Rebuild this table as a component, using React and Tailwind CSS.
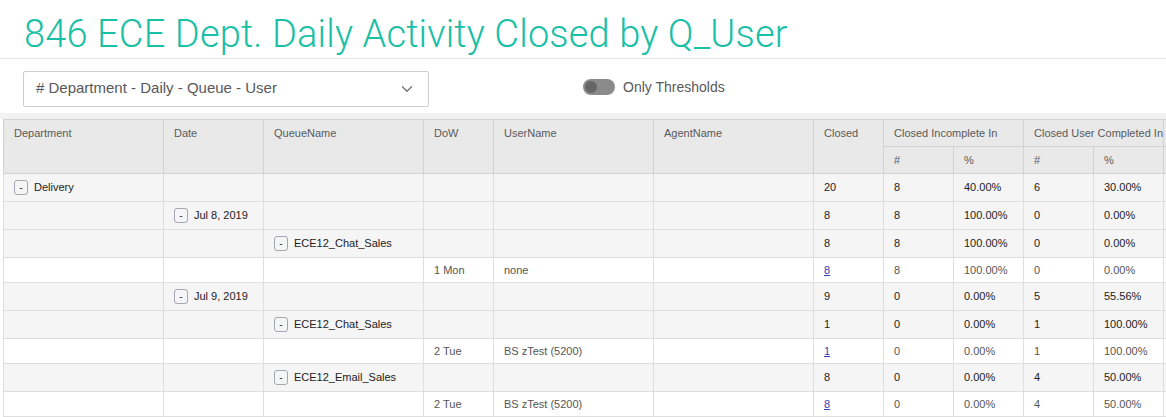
import { ChevronDown } from 'lucide-react'

const rows = [
  { group: true, dept: 'Delivery', closed: '20', ci: '8', cip: '40.00%', cu: '6', cup: '30.00%' },
  { group: true, date: 'Jul 8, 2019', closed: '8', ci: '8', cip: '100.00%', cu: '0', cup: '0.00%' },
  { group: true, queue: 'ECE12_Chat_Sales', closed: '8', ci: '8', cip: '100.00%', cu: '0', cup: '0.00%' },
  { dow: '1 Mon', user: 'none', closed: '8', link: true, ci: '8', cip: '100.00%', cu: '0', cup: '0.00%' },
  { group: true, date: 'Jul 9, 2019', closed: '9', ci: '0', cip: '0.00%', cu: '5', cup: '55.56%' },
  { group: true, queue: 'ECE12_Chat_Sales', closed: '1', ci: '0', cip: '0.00%', cu: '1', cup: '100.00%' },
  { dow: '2 Tue', user: 'BS zTest (5200)', closed: '1', link: true, ci: '0', cip: '0.00%', cu: '1', cup: '100.00%' },
  { group: true, queue: 'ECE12_Email_Sales', closed: '8', ci: '0', cip: '0.00%', cu: '4', cup: '50.00%' },
  { dow: '2 Tue', user: 'BS zTest (5200)', closed: '8', link: true, ci: '0', cip: '0.00%', cu: '4', cup: '50.00%' },
]

function Toggle({ label }) {
  return (
    <span className="inline-flex items-center gap-2">
      <span className="relative h-[16px] w-[32px] rounded-full bg-[#8a8a8a]">
        <span className="absolute left-[2px] top-[2px] h-[12px] w-[12px] rounded-full bg-[#666]" />
      </span>
      <span className="text-[14px] text-[#58585b]">{label}</span>
    </span>
  )
}

function Expander({ children }) {
  return (
    <span className="inline-flex items-center gap-[6px]">
      <span className="flex h-[15px] w-[14px] items-center justify-center rounded-[3px] border border-[#a4a6b4] text-[10px] leading-none text-[#333]">
        -
      </span>
      <span>{children}</span>
    </span>
  )
}

export default function App() {
  const th = 'border border-[#d2d2d2] px-[10px] text-left font-normal'
  const td = 'border border-[#dedede] px-[10px] whitespace-nowrap'

  return (
    <div className="h-[417px] w-[1166px] overflow-hidden bg-white" style={{ fontFamily: '"Liberation Sans", Arial, sans-serif' }}>
      <div className="h-[59px] border-b border-[#e6e6e6] pl-[24px] pt-[12px]">
        <h1 className="text-[38px] font-light leading-[44px] tracking-[0.15px] text-[#19bfa6]" style={{ fontFamily: 'Roboto, "Liberation Sans", sans-serif' }}>
          846 ECE Dept. Daily Activity Closed by Q_User
        </h1>
      </div>

      <div className="flex h-[54px] items-center pl-[23px] pb-[6px] pt-[11px]">
        <div className="flex h-[36px] w-[406px] items-center justify-between rounded-[2px] border border-[#cfcfcf] pl-[12px] pr-[12px]">
          <span className="text-[15px] text-[#58585b]">&#35; Department - Daily - Queue - User</span>
          <ChevronDown size={18} strokeWidth={1.6} className="text-[#6d6d6d]" />
        </div>
        <div className="ml-[154px] pt-[2px]">
          <Toggle label="Only Thresholds" />
        </div>
      </div>

      <div className="h-[6px] bg-[#f2f2f2]" />

      <div className="pl-[3px]">
        <table className="table-fixed border-collapse text-[11px] leading-none" style={{ width: 1400 }}>
          <colgroup>
            <col className="w-[160px]" />
            <col className="w-[100px]" />
            <col className="w-[160px]" />
            <col className="w-[70px]" />
            <col className="w-[160px]" />
            <col className="w-[160px]" />
            <col className="w-[70px]" />
            <col className="w-[70px]" />
            <col className="w-[70px]" />
            <col className="w-[70px]" />
            <col className="w-[70px]" />
            <col className="w-[120px]" />
            <col className="w-[120px]" />
          </colgroup>
          <thead className="bg-[#e9e9e9] text-[#5a5a5a]">
            <tr>
              <th rowSpan={2} className={`${th} h-[54px] align-top pt-[8px]`}>Department</th>
              <th rowSpan={2} className={`${th} align-top pt-[8px]`}>Date</th>
              <th rowSpan={2} className={`${th} align-top pt-[8px]`}>QueueName</th>
              <th rowSpan={2} className={`${th} align-top pt-[8px]`}>DoW</th>
              <th rowSpan={2} className={`${th} align-top pt-[8px]`}>UserName</th>
              <th rowSpan={2} className={`${th} align-top pt-[8px]`}>AgentName</th>
              <th rowSpan={2} className={`${th} align-top pt-[8px]`}>Closed</th>
              <th colSpan={2} className={`${th} h-[27px] whitespace-nowrap align-top pt-[8px]`}>Closed Incomplete In</th>
              <th colSpan={2} className={`${th} whitespace-nowrap align-top pt-[8px]`}>Closed User Completed In</th>
              <th colSpan={2} className={`${th} whitespace-nowrap align-top pt-[8px]`}>Closed Agent Completed In</th>
            </tr>
            <tr>
              <th className={`${th} h-[27px] align-middle`}>#</th>
              <th className={`${th} align-middle`}>%</th>
              <th className={`${th} align-middle`}>#</th>
              <th className={`${th} align-middle`}>%</th>
              <th className={`${th} align-middle`}>#</th>
              <th className={`${th} align-middle`}>%</th>
            </tr>
          </thead>
          <tbody>
            {rows.map((r, i) => (
              <tr
                key={i}
                className={r.group ? 'h-[28px] bg-[#f5f5f5] text-[#222]' : 'h-[25px] bg-white text-[#555]'}
              >
                <td className={td}>{r.dept && <Expander>{r.dept}</Expander>}</td>
                <td className={td}>{r.date && <Expander>{r.date}</Expander>}</td>
                <td className={td}>{r.queue && <Expander>{r.queue}</Expander>}</td>
                <td className={td}>{r.dow}</td>
                <td className={td}>{r.user}</td>
                <td className={td}></td>
                <td className={td}>
                  {r.link ? <span className="text-[#3b3bb0] underline">{r.closed}</span> : r.closed}
                </td>
                <td className={td}>{r.ci}</td>
                <td className={td}>{r.cip}</td>
                <td className={td}>{r.cu}</td>
                <td className={td}>{r.cup}</td>
                <td className={td}>0</td>
                <td className={td}>0.00%</td>
              </tr>
            ))}
          </tbody>
        </table>
      </div>
    </div>
  )
}
